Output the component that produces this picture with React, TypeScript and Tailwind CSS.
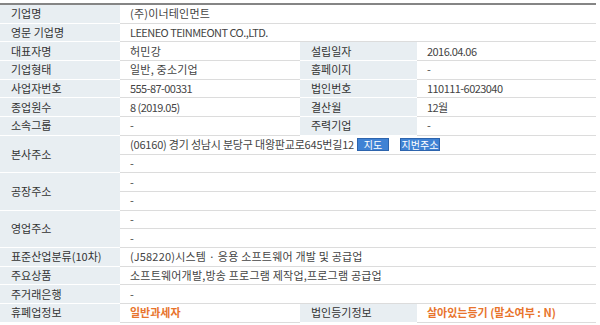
import React from "react";

const font = "font-['Noto_Sans_CJK_KR','Liberation_Sans',sans-serif]";
const narrow = "tracking-[-0.55px] text-[#444]";
const wide = "tracking-[0.2px] text-[#444]";

function Label({ children, span = "" }: { children: React.ReactNode; span?: string }) {
  return (
    <div className={`flex items-center pl-[11px] bg-[#e8eef2] border-b border-white text-[#333] ${span}`}>
      {children}
    </div>
  );
}

function Value({ children, span = "", className = narrow }: { children: React.ReactNode; span?: string; className?: string }) {
  return (
    <div className={`flex items-center pl-[10px] bg-white border-b border-[#dcdcdc] ${span} ${className}`}>
      {children}
    </div>
  );
}

export default function App() {
  return (
    <div className={`w-[600px] h-[325px] bg-white pt-[3px] ${font} text-[11px] leading-none`}>
      <div className="w-[596px] border-t-2 border-[#858585] grid grid-cols-[120px_180px_117px_179px] auto-rows-[18.7px]">
        <Label>기업명</Label>
        <Value span="col-span-3" className={wide}>(주)이너테인먼트</Value>

        <Label>영문 기업명</Label>
        <Value span="col-span-3">LEENEO TEINMEONT CO.,LTD.</Value>

        <Label>대표자명</Label>
        <Value className={wide}>허민강</Value>
        <Label>설립일자</Label>
        <Value>2016.04.06</Value>

        <Label>기업형태</Label>
        <Value className={wide}>일반, 중소기업</Value>
        <Label>홈페이지</Label>
        <Value>-</Value>

        <Label>사업자번호</Label>
        <Value>555-87-00331</Value>
        <Label>법인번호</Label>
        <Value>110111-6023040</Value>

        <Label>종업원수</Label>
        <Value>8 (2019.05)</Value>
        <Label>결산월</Label>
        <Value>12월</Value>

        <Label>소속그룹</Label>
        <Value>-</Value>
        <Label>주력기업</Label>
        <Value>-</Value>

        <Label span="row-span-2">본사주소</Label>
        <Value span="col-span-3" className="tracking-[-0.2px] text-[#444]">
          <span>(06160) 경기 성남시 분당구 대왕판교로645번길12</span>
          <span className="ml-[3px] h-[13px] w-[32px] flex items-center justify-center bg-[#3f82d4] border border-[#2d64ad] text-white text-[10px] tracking-normal">
            지도
          </span>
          <span className="ml-[11px] h-[13px] w-[40px] flex items-center justify-center bg-[#3f82d4] border border-[#2d64ad] text-white text-[10px] tracking-normal">
            지번주소
          </span>
        </Value>
        <Value span="col-span-3">-</Value>

        <Label span="row-span-2">공장주소</Label>
        <Value span="col-span-3">-</Value>
        <Value span="col-span-3">-</Value>

        <Label span="row-span-2">영업주소</Label>
        <Value span="col-span-3">-</Value>
        <Value span="col-span-3">-</Value>

        <Label>표준산업분류(10차)</Label>
        <Value span="col-span-3" className={wide}>(J58220)시스템 · 응용 소프트웨어 개발 및 공급업</Value>

        <Label>주요상품</Label>
        <Value span="col-span-3" className={wide}>소프트웨어개발,방송 프로그램 제작업,프로그램 공급업</Value>

        <Label>주거래은행</Label>
        <Value span="col-span-3">-</Value>

        <Label>휴폐업정보</Label>
        <Value className="font-bold text-[#e8742c]">일반과세자</Value>
        <Label>법인등기정보</Label>
        <Value className="font-bold text-[#e8742c]">살아있는등기 (말소여부 : N)</Value>
      </div>
    </div>
  );
}
